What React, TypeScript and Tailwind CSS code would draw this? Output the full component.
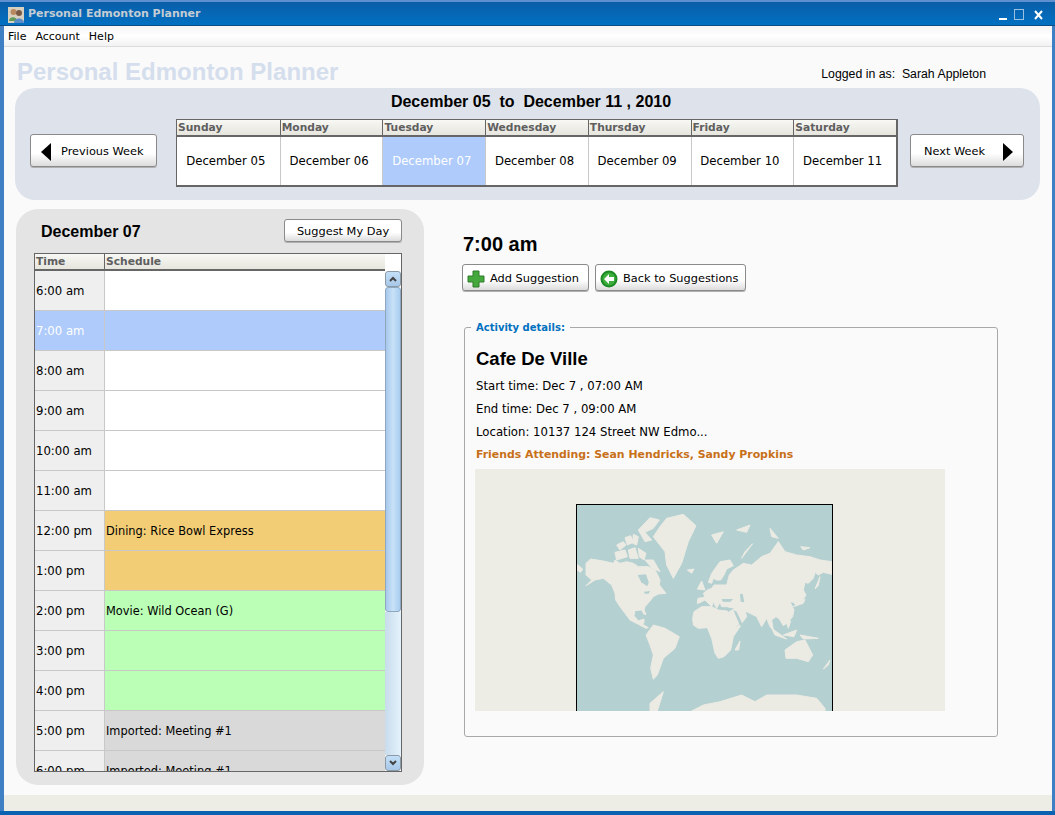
const days = [
  { name: "Sunday", date: "December 05" },
  { name: "Monday", date: "December 06" },
  { name: "Tuesday", date: "December 07", selected: true },
  { name: "Wednesday", date: "December 08" },
  { name: "Thursday", date: "December 09" },
  { name: "Friday", date: "December 10" },
  { name: "Saturday", date: "December 11" },
];

const rows = [
  { time: "6:00 am", label: "", color: "bg-white" },
  { time: "7:00 am", label: "", color: "bg-[#aecbfb]", selected: true },
  { time: "8:00 am", label: "", color: "bg-white" },
  { time: "9:00 am", label: "", color: "bg-white" },
  { time: "10:00 am", label: "", color: "bg-white" },
  { time: "11:00 am", label: "", color: "bg-white" },
  { time: "12:00 pm", label: "Dining: Rice Bowl Express", color: "bg-[#f2cd75]" },
  { time: "1:00 pm", label: "", color: "bg-[#f2cd75]" },
  { time: "2:00 pm", label: "Movie: Wild Ocean (G)", color: "bg-[#baffb5]" },
  { time: "3:00 pm", label: "", color: "bg-[#baffb5]" },
  { time: "4:00 pm", label: "", color: "bg-[#baffb5]" },
  { time: "5:00 pm", label: "Imported: Meeting #1", color: "bg-[#d9d9d9]" },
  { time: "6:00 pm", label: "Imported: Meeting #1", color: "bg-[#d9d9d9]" },
];

const buttonClass =
  "flex items-center whitespace-nowrap rounded-[3px] border border-[#8a8a8a] bg-gradient-to-b from-white from-60% to-[#dcdcdc] pt-[2px] text-[11.35px] text-black shadow-[0_1px_0_#b0b0b0]";

const headerClass =
  "border-[#666] bg-gradient-to-b from-[#f8f8f4] to-[#e6e5de] pt-px pl-px text-[10.7px] leading-[14px] font-bold text-[#5f5f5f]";

// traced by eye from the reference, in 3x crop coordinates
const land = [
  "M48 205 L62 192 L100 198 L130 205 L135 195 L150 205 L170 200 L190 205 L205 215 L235 215 L255 225 L262 238 L270 255 L268 270 L288 295 L265 297 L250 305 L240 318 L225 335 L222 345 L228 358 L222 358 L215 345 L195 347 L192 362 L205 378 L222 372 L222 382 L218 388 L235 398 L228 400 L205 388 L180 375 L165 355 L150 335 L137 315 L135 295 L125 270 L100 250 L75 255 L48 272 L65 255 L48 240 Z",
  "M21 208 L38 222 L32 232 L21 225 Z",
  "M205 105 L240 68 L268 75 L250 100 L225 112 L245 135 L225 140 Z",
  "M140 150 L160 140 L168 150 L150 165 Z",
  "M165 128 L182 122 L190 142 L172 150 Z",
  "M190 118 L205 125 L200 150 L188 145 Z",
  "M135 172 L165 165 L172 185 L140 195 Z",
  "M175 165 L195 158 L205 190 L180 190 Z",
  "M205 160 L228 175 L222 195 L208 185 Z",
  "M225 195 L250 195 L270 230 L245 218 Z",
  "M250 125 L270 95 L290 70 L340 58 L378 92 L355 140 L335 205 L310 250 L290 210 L285 170 Z",
  "M228 420 L250 390 L285 400 L328 425 L315 460 L280 490 L262 540 L250 553 L242 520 L250 480 L240 450 Z",
  "M382 325 L384 310 L405 307 L400 295 L412 285 L425 280 L432 270 L470 270 L478 240 L490 225 L520 205 L545 210 L575 185 L600 175 L625 140 L645 170 L680 180 L720 185 L750 195 L785 200 L785 238 L760 232 L745 240 L735 232 L730 250 L715 265 L705 262 L700 285 L708 300 L695 320 L680 332 L670 322 L660 320 L672 345 L668 365 L650 385 L640 392 L628 372 L618 365 L605 375 L610 405 L600 395 L590 370 L575 395 L560 365 L540 355 L525 348 L530 365 L515 385 L490 395 L475 352 L495 340 L470 335 L455 335 L450 322 L440 340 L430 320 L425 335 L405 315 L385 325 Z",
  "M415 262 L425 235 L450 200 L480 195 L490 212 L470 222 L462 240 L452 255 L440 255 L430 250 L425 265 Z",
  "M368 370 L372 350 L395 335 L425 335 L445 345 L472 348 L490 385 L500 395 L515 388 L490 425 L482 465 L462 485 L445 490 L435 475 L425 430 L412 398 L385 400 L370 390 Z",
  "M495 465 L510 438 L506 465 Z",
  "M645 465 L680 440 L705 435 L728 480 L715 500 L680 490 L648 490 Z",
  "M365 648 L400 630 L450 620 L515 600 L555 620 L590 600 L680 600 L740 610 L765 640 L765 648 Z",
  "M240 625 L280 590 L262 648 L240 648 Z",
  "M352 225 L372 222 L365 235 Z",
  "M382 282 L395 258 L405 285 Z",
  "M425 120 L460 110 L440 145 Z",
  "M500 105 L540 90 L530 112 Z",
  "M600 100 L625 130 L605 125 Z",
  "M692 155 L720 158 L700 165 Z",
  "M735 282 L750 245 L745 272 Z",
  "M670 335 L705 312 L700 325 Z",
  "M760 522 L780 495 L775 510 Z",
  "M605 400 L650 432 L615 420 Z",
  "M640 420 L680 405 L672 425 Z",
  "M645 370 L662 378 L655 400 Z",
  "M690 420 L745 430 L700 432 Z",
  "M515 190 L548 146 L525 170 Z",
];

const seas = [
  "M203 240 L228 238 L236 262 L232 274 L214 262 Z",
  "M455 312 L490 312 L480 321 L458 320 Z",
  "M510 298 L518 296 L523 322 L512 320 Z",
  "M490 345 L500 350 L520 392 L510 392 Z",
  "M222 290 L240 288 L236 296 L224 296 Z",
];

function WorldMap() {
  return (
    <svg viewBox="21 30 765 618" className="block h-[206px] w-[255px]">
      <rect x="21" y="30" width="765" height="618" fill="#b5d0d0" />
      <g fill="#ebebe4" stroke="#ebebe4" strokeWidth="3" strokeLinejoin="round">
        {land.map((d) => (
          <path key={d} d={d} />
        ))}
      </g>
      <g fill="#b5d0d0">
        {seas.map((d) => (
          <path key={d} d={d} />
        ))}
      </g>
    </svg>
  );
}

export default function App() {
  return (
    <div className="flex h-[815px] w-[1055px] flex-col overflow-hidden bg-[#3f7fc4] font-['DejaVu_Sans',sans-serif] text-[11.7px] text-black">
      {/* title bar */}
      <div className="flex h-[26px] shrink-0 items-center border-t-2 border-b border-t-[#5e8fd0] border-b-[#0c4c84] bg-gradient-to-b from-[#0a5ea8] to-[#0070c2] pt-[2px] pr-[11px] pl-[8px]">
        <svg viewBox="0 0 16 16" className="h-4 w-4">
          <rect width="16" height="16" fill="#d8d0c0" />
          <circle cx="5.5" cy="5" r="3" fill="#b98a62" />
          <path d="M1 14 C1 9 9 9 9 14 Z" fill="#5f9a58" />
          <circle cx="11" cy="6" r="3" fill="#7a5a44" />
          <path d="M6 16 C6 10 16 10 16 16 Z" fill="#5a8cc8" />
        </svg>
        <span className="ml-1 text-[11px] font-bold text-[#c4ccd4]">Personal Edmonton Planner</span>
        <svg viewBox="0 0 45 14" className="ml-auto h-[14px] w-[45px]" fill="none">
          <rect x="0" y="10" width="8" height="2" fill="white" />
          <rect x="15.5" y="1.5" width="9" height="10" stroke="#9cc0e0" />
          <path d="M36 3 L43 11 M43 3 L36 11" stroke="white" strokeWidth="2" />
        </svg>
      </div>

      <div className="mr-[3px] ml-[4px] flex min-h-0 flex-1 flex-col bg-[#fafafa]">
        {/* menu bar */}
        <div className="flex h-[21px] shrink-0 items-center gap-[9px] border-b border-[#dcdcdc] bg-gradient-to-b from-[#f4f4f4] via-white to-[#f2f2f2] pt-[2px] pl-1 text-[11px]">
          <span>File</span>
          <span>Account</span>
          <span>Help</span>
        </div>

        <div className="flex h-[41px] shrink-0 items-start justify-between pr-[66px] pl-[13px]">
          <div className="mt-[11px] font-['Liberation_Sans',sans-serif] text-[24px] leading-[28px] font-bold text-[#d5deed]">Personal Edmonton Planner</div>
          <div className="mt-[20px] font-['Liberation_Sans',sans-serif] text-[12.3px] leading-[14px]">Logged in as:&nbsp; Sarah Appleton</div>
        </div>

        {/* week selector */}
        <div className="mr-[12px] ml-[11px] h-[112px] shrink-0 rounded-[20px] bg-[#dee2ea]">
          <div className="pt-[4px] pl-[7px] text-center font-['Liberation_Sans',sans-serif] text-[16px] leading-[19px] font-bold whitespace-pre">December 05  to  December 11 , 2010</div>
          <div className="mt-[8px] flex items-start pl-[15px]">
            <button className={`${buttonClass} mt-[15px] h-[33px] w-[127px] pl-[10px]`}>
              <svg viewBox="0 0 10 18" className="h-[18px] w-[10px]"><path d="M10 0 V18 L0 9 Z" fill="black" /></svg>
              <span className="ml-[10px]">Previous Week</span>
            </button>
            <div className="ml-[19px] w-[722px] border border-r-2 border-b-2 border-[#666] bg-white">
              <div className="grid grid-cols-7 border-b-2 border-[#666]">
                {days.map((d, i) => (
                  <div key={d.name} className={`${headerClass} ${i > 0 ? "border-l" : ""}`}>{d.name}</div>
                ))}
              </div>
              <div className="grid grid-cols-7">
                {days.map((d, i) => (
                  <div
                    key={d.date}
                    className={`flex h-[48px] items-center justify-center border-[#c8c8c8] pt-[2px] pr-[5px] ${i > 0 ? "border-l" : ""} ${d.selected ? "bg-[#aecbfb] text-white" : ""}`}
                  >
                    {d.date}
                  </div>
                ))}
              </div>
            </div>
            <button className={`${buttonClass} mt-[15px] ml-[12px] h-[33px] w-[114px] justify-between pr-[10px] pl-[13px]`}>
              <span>Next Week</span>
              <svg viewBox="0 0 10 18" className="h-[18px] w-[10px]"><path d="M0 0 V18 L10 9 Z" fill="black" /></svg>
            </button>
          </div>
        </div>

        <div className="mt-[9px] flex min-h-0 flex-1 items-start">
          {/* day schedule */}
          <div className="ml-[12px] h-[576px] w-[408px] shrink-0 rounded-[22px] bg-[#e4e4e4] pt-[10px] pr-[22px] pl-[18px]">
            <div className="flex h-[34px] items-start justify-between">
              <div className="mt-[3px] ml-[7px] font-['Liberation_Sans',sans-serif] text-[16px] leading-[19px] font-bold">December 07</div>
              <button className={`${buttonClass} h-[23px] w-[118px] justify-center`}>Suggest My Day</button>
            </div>
            <div className="flex h-[519px] overflow-hidden border border-[#666] bg-white">
              <div className="w-[350px] shrink-0">
                <div className="flex h-[17px] border-b-2 border-[#666]">
                  <div className={`${headerClass} w-[70px] border-r`}>Time</div>
                  <div className={`${headerClass} flex-1`}>Schedule</div>
                </div>
                {rows.map((r) => (
                  <div key={r.time} className="flex h-[40px] border-b border-[#c8c8c8]">
                    <div className={`flex w-[70px] shrink-0 items-center border-r border-[#c8c8c8] pt-[2px] pl-px ${r.selected ? "bg-[#aecbfb] text-white" : "bg-[#efefef]"}`}>{r.time}</div>
                    <div className={`flex flex-1 items-center pt-[2px] pl-px text-[11.4px] ${r.color}`}>{r.label}</div>
                  </div>
                ))}
              </div>
              <div className="flex w-[16px] shrink-0 flex-col pt-[17px]">
                <div className="flex h-[16px] shrink-0 items-center justify-center rounded-[3px] border border-[#8a9aa8] bg-gradient-to-b from-[#c4e0f8] to-[#a8c8e8]">
                  <svg viewBox="0 0 8 6" className="h-[6px] w-2" fill="none"><path d="M1 5 L4 2 L7 5" stroke="#444" strokeWidth="2" /></svg>
                </div>
                <div className="h-[325px] shrink-0 rounded-[3px] border border-[#8fa8c0] bg-gradient-to-r from-[#a8c8ec] via-[#c8e2f8] to-[#a8cdf0]" />
                <div className="flex-1 bg-gradient-to-r from-[#c8dcec] to-[#e4f2fc]" />
                <div className="flex h-[16px] shrink-0 items-center justify-center rounded-[3px] border border-[#8a9aa8] bg-gradient-to-b from-[#c4e0f8] to-[#a8c8e8]">
                  <svg viewBox="0 0 8 6" className="h-[6px] w-2" fill="none"><path d="M1 1 L4 4 L7 1" stroke="#444" strokeWidth="2" /></svg>
                </div>
              </div>
            </div>
          </div>

          {/* details */}
          <div className="ml-[40px] w-[540px] shrink-0">
            <div className="mt-[22px] ml-[-1px] font-['Liberation_Sans',sans-serif] text-[20px] leading-[26px] font-bold">7:00 am</div>
            <div className="mt-[7px] ml-[-2px] flex gap-[6px]">
              <button className={`${buttonClass} h-[27px] w-[127px] pl-[4px]`}>
                <svg viewBox="0 0 18 18" className="h-[18px] w-[18px]">
                  <path d="M6 1 H12 V6 H17 V12 H12 V17 H6 V12 H1 V6 H6 Z" fill="#44a83c" stroke="#2c7a28" />
                </svg>
                <span className="ml-[5px]">Add Suggestion</span>
              </button>
              <button className={`${buttonClass} h-[27px] w-[151px] pl-[4px]`}>
                <svg viewBox="0 0 18 18" className="h-[18px] w-[18px]">
                  <circle cx="9" cy="9" r="8.5" fill="#1d8a24" />
                  <circle cx="9" cy="9" r="6.5" fill="#3cae3c" />
                  <path d="M9 4 L4 9 L9 14 V11 H14 V7 H9 Z" fill="white" />
                </svg>
                <span className="ml-[5px]">Back to Suggestions</span>
              </button>
            </div>

            <div className="relative mt-[36px] h-[410px] w-[534px] rounded-[3px] border border-[#a8a8a8] pt-[19px] pl-[11px]">
              <div className="absolute top-[-7px] left-[6px] bg-[#fafafa] px-[5px] text-[10px] leading-[13px] font-bold text-[#0070c0]">Activity details:</div>
              <div className="font-['Liberation_Sans',sans-serif] text-[18.5px] leading-[24px] font-bold">Cafe De Ville</div>
              <div className="mt-[4px] leading-[23px]">Start time: Dec 7 , 07:00 AM</div>
              <div className="leading-[23px]">End time: Dec 7 , 09:00 AM</div>
              <div className="leading-[23px]">Location: 10137 124 Street NW Edmo...</div>
              <div className="text-[10.9px] leading-[22px] font-bold text-[#c87018]">Friends Attending: Sean Hendricks, Sandy Propkins</div>
              <div className="mt-[3px] ml-[-1px] h-[242px] w-[470px] overflow-hidden bg-[#edece5] pt-[35px] pl-[101px]">
                <div className="w-[257px] border border-black">
                  <WorldMap />
                </div>
              </div>
            </div>
          </div>
        </div>

        <div className="h-[16px] shrink-0 bg-[#edece5]" />
      </div>
      <div className="h-[4px] shrink-0 bg-[#0a62b0]" />
    </div>
  );
}
